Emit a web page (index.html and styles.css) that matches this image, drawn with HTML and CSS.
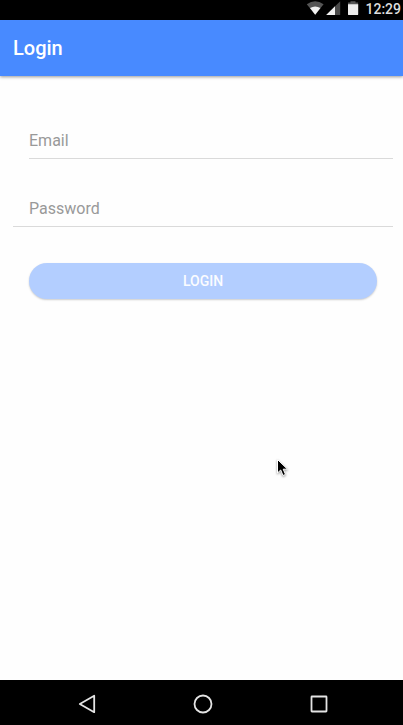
FILE: index.html
```html
<!DOCTYPE html>
<html lang="en">
<head>
<meta charset="utf-8">
<title>Login</title>
<link rel="stylesheet" href="styles.css">
</head>
<body>
<div class="screen">
  <div class="status-bar">
    <svg class="status-icons" width="54" height="20" viewBox="0 0 54 20">
      <path d="M-.2 4.300Q8.200 -2 16.600 4.300L8.200 14.800Z" fill="#555"/>
      <path d="M3 8Q8.200 4.800 13.400 8L8.200 14.800Z" fill="#f2f2f2"/>
      <path d="M19.200 15L33.200 1.200V15Z" fill="#4a4a4a"/>
      <path d="M19.200 15L28 6.300V15Z" fill="#f2f2f2"/>
      <path d="M43.500 1.200h5v1.300h2.600V5H41V2.500H43.500Z" fill="#555"/>
      <path d="M41 4.200h10.200v10q0 .9-.9.900h-8.400q-.9 0-.9-.9Z" fill="#ededed"/>
    </svg>
    <span class="clock">12:29</span>
  </div>
  <header class="toolbar"><h1 class="title">Login</h1></header>
  <main class="content">
    <form class="login-form">
      <div class="item"><div class="item-inner">Email</div></div>
      <div class="item item-last">Password</div>
      <button class="login-button" type="button" disabled>LOGIN</button>
    </form>
    <svg class="cursor" width="14" height="21" viewBox="0 0 14 21">
      <path d="M1.500 1.500V15L4.700 12L7 17.500L9.500 16.400L7.200 11.200H11.500Z" fill="#000" stroke="#fff" stroke-width="1.000"/>
    </svg>
  </main>
  <nav class="nav-bar">
    <svg width="24" height="24" viewBox="0 0 24 24"><path d="M19.200 3.800V20.200L4.800 12Z"/></svg>
    <svg width="24" height="24" viewBox="0 0 24 24"><circle cx="12" cy="12" r="8.500"/></svg>
    <svg width="24" height="24" viewBox="0 0 24 24"><rect x="4.500" y="4.500" width="15" height="15" rx=".5"/></svg>
  </nav>
</div>
</body>
</html>
```
FILE: styles.css
```css
* {
  box-sizing: border-box;
}

body {
  margin: 0;
  font-family: Roboto, "Liberation Sans", sans-serif;
}

.screen {
  display: flex;
  flex-direction: column;
  width: 403px;
  height: 725px;
  overflow: hidden;
  background: #fefefe;
}

.status-bar {
  display: flex;
  flex: none;
  justify-content: flex-end;
  height: 20px;
  padding-right: 2px;
  background: #000;
}

.status-icons {
  margin-right: 4px;
  overflow: visible;
}

.clock {
  color: #dedede;
  font-size: 14px;
  font-weight: 500;
  line-height: 18px;
}

.toolbar {
  display: flex;
  flex: none;
  align-items: center;
  height: 56px;
  padding-left: 13px;
  background: #488aff;
  box-shadow: 0 1px 3px rgba(0, 0, 0, .4);
}

.title {
  margin: 0;
  color: #fff;
  font-size: 20px;
  font-weight: 500;
  line-height: 24px;
}

.content {
  position: relative;
  flex: 1;
  padding: 39px 10px 0 13px;
}

.item {
  height: 44px;
  padding-left: 16px;
  color: #999;
  font-size: 16px;
  line-height: 51px;
}

.item-inner {
  height: 44px;
  border-bottom: 1px solid #dadada;
}

.item-last {
  margin-top: 24px;
  border-bottom: 1px solid #dadada;
}

.login-button {
  display: block;
  width: 348px;
  height: 36px;
  margin: 36px 0 0 16px;
  padding: 0;
  border: 0;
  border-radius: 18px;
  background: #b3ceff;
  box-shadow: 0 1px 2px rgba(0, 0, 0, .2);
  color: #fbfcff;
  font: 500 14px/36px Roboto, "Liberation Sans", sans-serif;
}

.cursor {
  position: absolute;
  top: 382px;
  left: 276px;
  filter: drop-shadow(0 1px 1px rgba(0, 0, 0, .4));
}

.nav-bar {
  display: flex;
  flex: none;
  align-items: center;
  justify-content: center;
  gap: 92px;
  height: 45px;
  padding: 3px 0 0 3px;
  background: #000;
}

.nav-bar svg {
  fill: none;
  stroke: #e4e4e4;
  stroke-width: 1.8;
  stroke-linejoin: round;
}
```
